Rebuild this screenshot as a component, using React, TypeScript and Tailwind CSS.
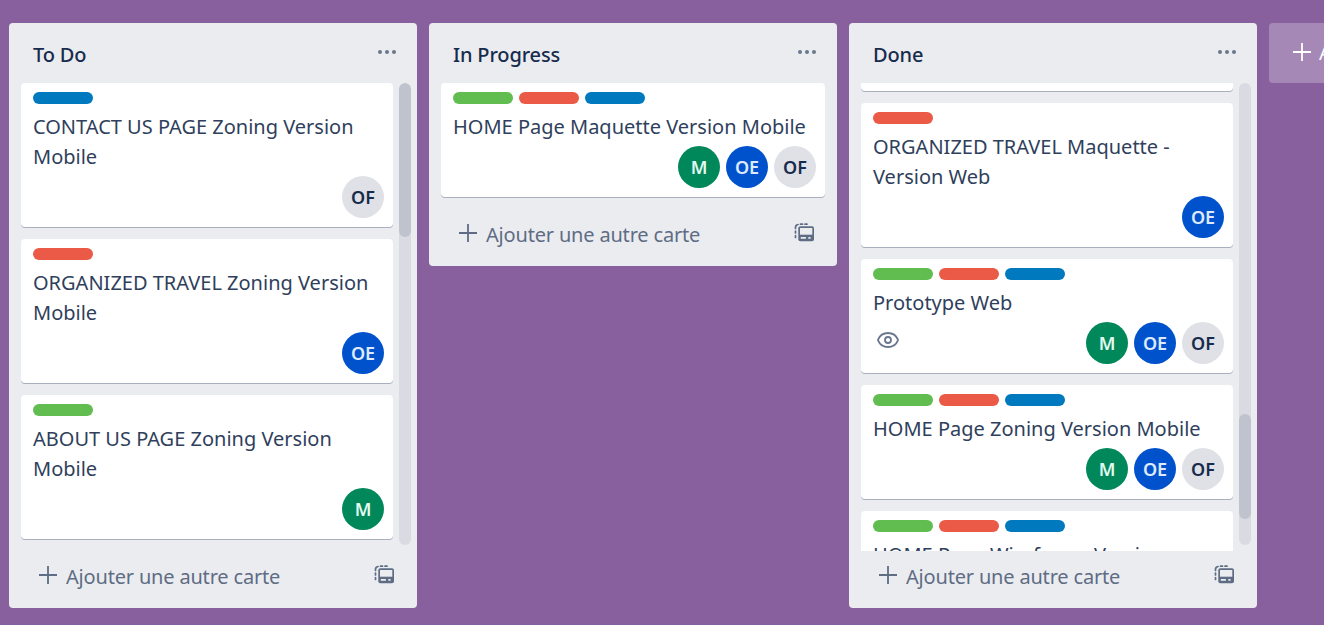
import { Eye } from "lucide-react";

type Member = "M" | "OE" | "OF";
type Label = "green" | "red" | "blue";

interface Card {
  labels: Label[];
  title: string;
  members: Member[];
  watched?: boolean;
}

const todo: Card[] = [
  { labels: ["blue"], title: "CONTACT US PAGE Zoning Version Mobile", members: ["OF"] },
  { labels: ["red"], title: "ORGANIZED TRAVEL Zoning Version Mobile", members: ["OE"] },
  { labels: ["green"], title: "ABOUT US PAGE Zoning Version Mobile", members: ["M"] },
];

const progress: Card[] = [
  { labels: ["green", "red", "blue"], title: "HOME Page Maquette Version Mobile", members: ["M", "OE", "OF"] },
];

// last card is cut off by the list's scroll area, only its first line shows
const done: Card[] = [
  { labels: ["red"], title: "ORGANIZED TRAVEL Maquette - Version Web", members: ["OE"] },
  { labels: ["green", "red", "blue"], title: "Prototype Web", members: ["M", "OE", "OF"], watched: true },
  { labels: ["green", "red", "blue"], title: "HOME Page Zoning Version Mobile", members: ["M", "OE", "OF"] },
  { labels: ["green", "red", "blue"], title: "HOME Page Wireframe Version", members: [] },
];

const labelColors: Record<Label, string> = {
  green: "bg-[#61bd4f]",
  red: "bg-[#eb5a46]",
  blue: "bg-[#0079bf]",
};

const memberColors: Record<Member, string> = {
  M: "bg-[#00875a] text-[#e3fcef]",
  OE: "bg-[#0052cc] text-[#deebff]",
  OF: "bg-[#dfe1e6] text-[#172b4d] pt-px",
};

function PlusIcon({ className }: { className?: string }) {
  return (
    <svg width="18" height="18" viewBox="0 0 18 18" className={className} stroke="currentColor" strokeWidth="1.8">
      <path d="M9 0v18M0 9h18" />
    </svg>
  );
}

function TemplateIcon() {
  return (
    <svg width="20" height="20" viewBox="0 0 20 20" fill="none">
      <path d="M1.5 14.5v-2M1.5 10v-2M1.5 5.5v-1a3 3 0 0 1 2.5-3M6.5 1.2h2M11 1.2h2" stroke="#5e6c84" strokeWidth="1.7" strokeLinecap="round" />
      <rect x="4.3" y="3.3" width="15.7" height="15" rx="2" fill="#5e6c84" />
      <rect x="6" y="5" width="12.3" height="6.7" fill="#ebecf0" />
      <rect x="6.7" y="14" width="5.3" height="1.7" rx="0.5" fill="#ebecf0" />
      <rect x="14.3" y="14" width="2.3" height="1.7" rx="0.5" fill="#ebecf0" />
    </svg>
  );
}

function Avatar({ name }: { name: Member }) {
  return (
    <div className={`flex h-[42px] w-[42px] items-center justify-center rounded-full text-[18px] font-semibold ${memberColors[name]}`}>
      {name}
    </div>
  );
}

function BoardCard({ card }: { card: Card }) {
  return (
    <div className="mb-3 rounded bg-white pt-[9px] pr-[9px] pb-[9px] pl-3 shadow-[0_1px_0_#a9afbd]">
      <div className="flex gap-[6px]">
        {card.labels.map((label) => (
          <span key={label} className={`h-3 w-[60px] rounded-md ${labelColors[label]}`} />
        ))}
      </div>
      <div className="mt-2 pr-[3px] text-[20px] leading-[30px] text-[#2f3f5c]">{card.title}</div>
      <div className="mt-1 flex items-center justify-between">
        <div className="pb-[6px] pl-[3px] text-[#6b778c]">{card.watched && <Eye size={24} strokeWidth={1.8} />}</div>
        <div className="flex gap-[6px]">
          {card.members.map((member) => (
            <Avatar key={member} name={member} />
          ))}
        </div>
      </div>
    </div>
  );
}

function Column({
  title,
  cards,
  thumbTop,
  thumbHeight,
  sliver,
}: {
  title: string;
  cards: Card[];
  thumbTop?: number;
  thumbHeight?: number;
  sliver?: boolean;
}) {
  const scrolls = thumbHeight !== undefined;
  return (
    <section className={`flex w-[408px] shrink-0 flex-col rounded bg-[#ebecf0] ${scrolls ? "h-[585px]" : ""}`}>
      <header className="flex h-[60px] shrink-0 items-start justify-between pt-[18px] pr-5 pl-6">
        <h2 className="text-[20px] leading-[28px] font-medium tracking-[-0.15px] text-[#172b4d]">{title}</h2>
        <svg width="20" height="6" viewBox="0 0 20 6" className="mt-2" fill="#6b778c">
          <circle cx="3" cy="3" r="2" />
          <circle cx="10" cy="3" r="2" />
          <circle cx="17" cy="3" r="2" />
        </svg>
      </header>
      <div className={`flex gap-[6px] pl-3 ${scrolls ? "h-[468px]" : ""}`}>
        <div className={`min-w-0 flex-1 overflow-hidden ${scrolls ? "" : "pr-3"}`}>
          {sliver && <div className="mb-3 h-2 rounded-b bg-white shadow-[0_1px_0_#a9afbd]" />}
          {cards.map((card) => (
            <BoardCard key={card.title} card={card} />
          ))}
        </div>
        {scrolls && (
          <div className="mr-[6px] mb-[6px] w-3 shrink-0 overflow-hidden rounded-md bg-[#d9dae2]">
            <div className="rounded-md bg-[#bfc3ce]" style={{ marginTop: thumbTop, height: thumbHeight }} />
          </div>
        )}
      </div>
      <footer className="flex h-[57px] shrink-0 items-start justify-between pt-[12px] pr-[23px] pl-[30px] text-[#5e6c84]">
        <div className="flex items-center gap-[9px] text-[20px] leading-[28px] tracking-[-0.18px]">
          <PlusIcon className="mb-[5px]" />
          <span>Ajouter une autre carte</span>
        </div>
        <div className="pt-[2px]">
          <TemplateIcon />
        </div>
      </footer>
    </section>
  );
}

export default function App() {
  return (
    <div
      className="flex h-[625px] w-[1324px] items-start gap-3 overflow-hidden bg-[#89609e] pt-[23px] pl-[9px]"
      style={{ fontFamily: '"Noto Sans", "Open Sans", sans-serif' }}
    >
      <Column title="To Do" cards={todo} thumbTop={0} thumbHeight={154} />
      <Column title="In Progress" cards={progress} />
      <Column title="Done" cards={done} thumbTop={331} thumbHeight={105} sliver />
      <button className="flex h-[60px] w-[408px] shrink-0 items-center gap-2 rounded bg-white/25 pl-6 text-left text-[20px] text-white">
        <PlusIcon className="mb-[2px]" />
        <span>Ajouter une autre liste</span>
      </button>
    </div>
  );
}
